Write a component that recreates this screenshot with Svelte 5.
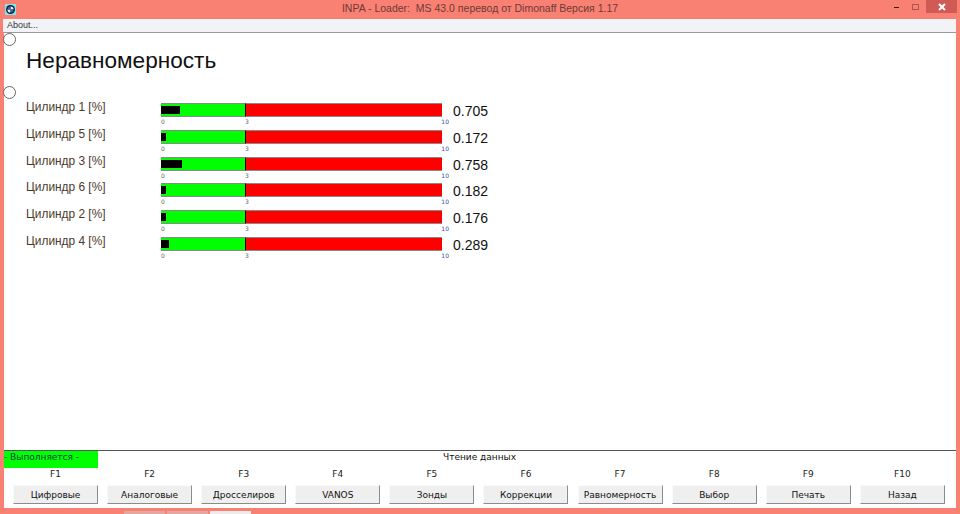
<script>
    const rows = [
        { name: 'Цилиндр 1 [%]', value: 0.705 },
        { name: 'Цилиндр 5 [%]', value: 0.172 },
        { name: 'Цилиндр 3 [%]', value: 0.758 },
        { name: 'Цилиндр 6 [%]', value: 0.182 },
        { name: 'Цилиндр 2 [%]', value: 0.176 },
        { name: 'Цилиндр 4 [%]', value: 0.289 }
    ];

    const keys = ['Цифровые', 'Аналоговые', 'Дросселиров', 'VANOS', 'Зонды', 'Коррекции', 'Равномерность', 'Выбор', 'Печать', 'Назад'];

    // шкала 0..10, чёрная полоса примерно 27px на единицу
    const fill = (v) => Math.round(v * 27.5) + 'px';
</script>

<div class="window">
    <header class="titlebar">
        <svg class="logo" viewBox="0 0 16 16" width="16" height="16">
            <rect width="16" height="16" fill="#7fe6ee" />
            <circle cx="8" cy="8" r="6.5" fill="#111a2e" />
            <path d="M8 3.5A4.5 4.5 0 0 1 12.5 8H8zM8 12.5A4.5 4.5 0 0 1 3.5 8H8z" fill="#f2f4f8" />
            <path d="M8 3.5A4.5 4.5 0 0 0 3.5 8H8zM8 12.5A4.5 4.5 0 0 0 12.5 8H8z" fill="#2f62c8" />
        </svg>
        <span class="title">INPA - Loader:  MS 43.0 перевод от Dimonaff Версия 1.17</span>
        <div class="controls">
            <span class="min"></span>
            <span class="max"></span>
            <span class="close">
                <svg viewBox="0 0 10 10" width="10" height="10">
                    <path d="M2 2L8 8M8 2L2 8" stroke="#fff" stroke-width="2" />
                </svg>
            </span>
        </div>
    </header>

    <nav class="menu">About...</nav>

    <main class="content">
        <span class="radio first"></span>
        <span class="radio second"></span>
        <h1>Неравномерность</h1>
        <div class="rows">
            {#each rows as row}
                <div class="row">
                    <span class="label">{row.name}</span>
                    <div class="gauge">
                        <div class="bar">
                            <div class="green"></div>
                            <div class="red"></div>
                            <div class="level" style="width: {fill(row.value)}"></div>
                        </div>
                        <div class="ticks">
                            <span>0</span>
                            <span class="t3">3</span>
                            <span class="t10">10</span>
                        </div>
                    </div>
                    <span class="value">{row.value.toFixed(3)}</span>
                </div>
            {/each}
        </div>
    </main>

    <section class="bottom">
        <div class="status">
            <div class="running">- Выполняется -</div>
            <div class="reading">Чтение данных</div>
        </div>
        <div class="keys">
            {#each keys as key, i}
                <div class="key">
                    <span class="fkey">F{i + 1}</span>
                    <button type="button">{key}</button>
                </div>
            {/each}
        </div>
    </section>

    <footer class="taskbar">
        <span></span>
        <span></span>
        <span class="light"></span>
    </footer>
</div>

<style>
    :global(body) {
        margin: 0;
        background: #f98174;
    }

    .window {
        width: 960px;
        height: 514px;
        display: flex;
        flex-direction: column;
        background: #f98174;
        overflow: hidden;
        font-family: "DejaVu Sans", sans-serif;
    }

    .titlebar {
        height: 19px;
        display: flex;
        align-items: center;
        position: relative;
        flex: none;
    }

    .logo {
        margin-left: 5px;
        margin-top: -1px;
        width: 11px;
        height: 11px;
    }

    .title {
        position: absolute;
        left: 0;
        right: 0;
        top: 1px;
        text-align: center;
        font-family: "Liberation Sans", sans-serif;
        font-size: 10.5px;
        line-height: 14px;
        color: #6e3a34;
        white-space: pre;
    }

    .controls {
        position: absolute;
        right: 3px;
        top: 0;
        height: 13px;
        display: flex;
        align-items: center;
    }

    .min {
        width: 5px;
        height: 1px;
        background: #222;
        margin-right: 13px;
        margin-top: 2px;
    }

    .max {
        width: 5px;
        height: 4px;
        border: 1px solid #a8574f;
        margin-right: 7px;
    }

    .close {
        width: 31px;
        height: 13px;
        background: #d05a55;
        display: flex;
        align-items: center;
        justify-content: center;
    }

    .menu {
        flex: none;
        height: 13px;
        margin: 0 4px 0 3px;
        padding-left: 4px;
        background: #f1f3f7;
        border-bottom: 1px solid #9a9a9a;
        font-family: "Liberation Sans", sans-serif;
        font-size: 9px;
        line-height: 13px;
        color: #333;
    }

    .content {
        flex: none;
        height: 417px;
        margin: 0 4px 0 4px;
        background: #fff;
        position: relative;
        box-sizing: border-box;
        padding: 14px 0 0 22px;
        font-family: "Liberation Sans", sans-serif;
    }

    .radio {
        position: absolute;
        left: -1px;
        width: 11px;
        height: 11px;
        border: 1px solid #666;
        border-radius: 50%;
        background: #fff;
    }

    .first {
        top: 0;
    }

    .second {
        top: 53px;
    }

    h1 {
        margin: 0;
        font-size: 22.6px;
        font-weight: normal;
        line-height: 28px;
        color: #111;
    }

    .rows {
        margin-top: 28px;
    }

    .row {
        display: flex;
        align-items: flex-start;
        height: 26.75px;
    }

    .label {
        width: 135px;
        font-size: 11.9px;
        line-height: 14px;
        color: #4a3a2a;
        margin-top: -3px;
    }

    .gauge {
        width: 281px;
    }

    .bar {
        position: relative;
        display: flex;
        height: 14px;
    }

    .green {
        width: 84px;
        background: #00ff00;
        border-top: 1px solid #8a8a8a;
        border-bottom: 1px solid #8a8a8a;
        box-sizing: border-box;
    }

    .red {
        flex: 1;
        background: #ff0000;
        border-top: 1px solid #8a8a8a;
        border-bottom: 1px solid #8a8a8a;
        border-left: 1px solid #300000;
        box-sizing: border-box;
    }

    .level {
        position: absolute;
        left: 0;
        top: 3px;
        height: 8px;
        background: #000;
    }

    .ticks {
        position: relative;
        height: 9px;
        font-family: "DejaVu Sans", sans-serif;
        font-size: 6px;
        line-height: 10px;
        color: #666;
    }

    .t3 {
        position: absolute;
        left: 84px;
    }

    .t10 {
        position: absolute;
        right: -7px;
        color: #2c4fa0;
    }

    .value {
        margin-left: 11px;
        font-size: 14px;
        line-height: 16px;
        color: #111;
    }

    .bottom {
        flex: none;
        height: 58px;
        margin: 0 4px 0 4px;
        background: #fff;
        border-top: 1px solid #555;
        box-sizing: border-box;
    }

    .status {
        height: 18px;
        display: flex;
        font-size: 9px;
        color: #111;
    }

    .running {
        width: 94px;
        height: 17px;
        background: #00ff00;
        line-height: 13px;
        color: #044;
        white-space: nowrap;
    }

    .reading {
        width: 763px;
        text-align: center;
        line-height: 13px;
    }

    .keys {
        display: flex;
        gap: 9.1px;
        padding-left: 9px;
    }

    .key {
        width: 85px;
        display: flex;
        flex-direction: column;
        align-items: center;
    }

    .fkey {
        height: 16px;
        font-size: 9px;
        line-height: 11px;
        color: #222;
    }

    button {
        width: 85px;
        height: 19px;
        padding: 0;
        background: #efefef;
        border: none;
        border-right: 1px solid #8c8c8c;
        border-bottom: 1px solid #8c8c8c;
        border-top: 1px solid #fafafa;
        border-left: 1px solid #fafafa;
        font-family: "DejaVu Sans", sans-serif;
        font-size: 9px;
        color: #111;
    }

    .taskbar {
        flex: none;
        display: flex;
        gap: 2px;
        padding: 3px 0 0 124px;
        height: 3px;
    }

    .taskbar span {
        width: 41px;
        height: 3px;
        background: #e0a8a0;
    }

    .taskbar .light {
        background: #ececec;
    }
</style>
